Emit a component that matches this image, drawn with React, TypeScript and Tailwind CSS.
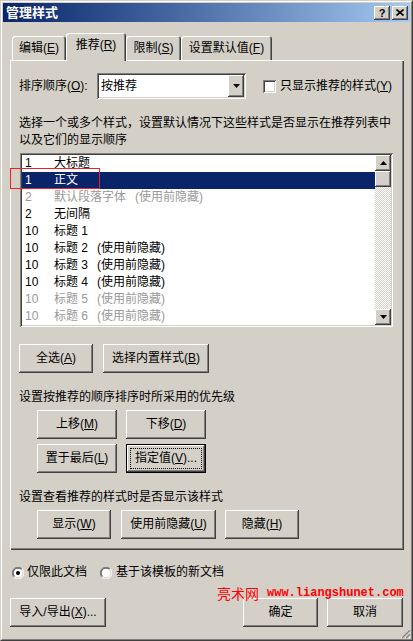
import type { ReactNode } from 'react';

// classic 3D edges
const raised = 'shadow-[inset_-1px_-1px_#404040,inset_1px_1px_#ffffff,inset_-2px_-2px_#808080]';
const sunken =
  'shadow-[inset_1px_1px_#808080,inset_-1px_-1px_#ffffff,inset_2px_2px_#404040,inset_-2px_-2px_#d4d0c8]';

const Btn = ({ w, children }: { w: string; children: ReactNode }) => (
  <div className={`${w} h-[29px] shrink-0 flex items-center justify-center bg-[#d4d0c8] ${raised}`}>
    {children}
  </div>
);

const Tab = ({ w, children }: { w: string; children: ReactNode }) => (
  <div
    className={`${w} h-[24px] mb-[1px] flex items-center justify-center rounded-t-[3px] shadow-[inset_1px_1px_#ffffff,inset_-1px_0_#404040,inset_-2px_0_#808080]`}
  >
    {children}
  </div>
);

const Arrow = ({ up }: { up?: boolean }) => (
  <svg width="7" height="4" viewBox="0 0 7 4">
    <path d={up ? 'M3.5 0 L7 4 L0 4 Z' : 'M0 0 L7 0 L3.5 4 Z'} fill="#000" />
  </svg>
);

const Radio = ({ checked }: { checked?: boolean }) => (
  <svg width="12" height="12" viewBox="0 0 12 12">
    <circle cx="6" cy="6" r="5.5" fill="#ffffff" />
    <path d="M1.8 10.2 A5.5 5.5 0 0 1 10.2 1.8" fill="none" stroke="#808080" strokeWidth="1" />
    <path d="M10.2 1.8 A5.5 5.5 0 0 1 1.8 10.2" fill="none" stroke="#ffffff" strokeWidth="1" />
    <path d="M2.5 9.5 A4.5 4.5 0 0 1 9.5 2.5" fill="none" stroke="#404040" strokeWidth="1" />
    <path d="M9.5 2.5 A4.5 4.5 0 0 1 2.5 9.5" fill="none" stroke="#d4d0c8" strokeWidth="1" />
    {checked && <circle cx="6" cy="6" r="2" fill="#000" />}
  </svg>
);

const styles: { n: string; name: string; hidden?: boolean; gray?: boolean; sel?: boolean }[] = [
  { n: '1', name: '大标题' },
  { n: '1', name: '正文', sel: true },
  { n: '2', name: '默认段落字体', hidden: true, gray: true },
  { n: '2', name: '无间隔' },
  { n: '10', name: '标题 1' },
  { n: '10', name: '标题 2', hidden: true },
  { n: '10', name: '标题 3', hidden: true },
  { n: '10', name: '标题 4', hidden: true },
  { n: '10', name: '标题 5', hidden: true, gray: true },
  { n: '10', name: '标题 6', hidden: true, gray: true },
];

const App = () => {
  return (
    <div className="font-[family-name:'Liberation_Sans','Noto_Sans_CJK_SC',sans-serif] text-[12px] leading-[17px] text-black">
      <div className="relative w-[413px] h-[641px] bg-[#d4d0c8] border border-t-[#d4d0c8] border-l-[#d4d0c8] border-r-[#404040] border-b-[#404040]">
        <div className="h-full border border-t-white border-l-white border-r-[#808080] border-b-[#808080] p-[1px] flex flex-col">
          {/* title bar */}
          <div className="h-[19px] shrink-0 flex items-center justify-between bg-linear-to-r from-[#0a246a] to-[#a6caf0] pl-[3px] pr-[2px]">
            <div className="text-white font-bold text-[13px] leading-[19px]">管理样式</div>
            <div className="flex gap-[2px]">
              <div className={`w-[16px] h-[14px] flex items-center justify-center bg-[#d4d0c8] ${raised}`}>
                <span className="font-bold text-[11px] leading-[12px] font-[family-name:'Liberation_Sans',sans-serif]">?</span>
              </div>
              <div className={`w-[16px] h-[14px] flex items-center justify-center bg-[#d4d0c8] ${raised}`}>
                <svg width="8" height="7" viewBox="0 0 8 7">
                  <path d="M0.5 0.5 L7.5 6.5 M7.5 0.5 L0.5 6.5" stroke="#000" strokeWidth="1.6" />
                </svg>
              </div>
            </div>
          </div>

          <div className="flex flex-col pl-[7px] pr-[6px]">
            {/* tabs */}
            <div className="relative z-10 mt-[11px] ml-[2px] h-[28px] flex items-end">
              <Tab w="w-[54px]">
                编辑(<u>E</u>)
              </Tab>
              <div className="w-[60px] h-[28px] pb-[3px] flex items-center justify-center bg-[#d4d0c8] rounded-t-[3px] shadow-[inset_1px_1px_#ffffff,inset_-1px_0_#404040,inset_-2px_0_#808080]">
                推荐(<u>R</u>)
              </div>
              <Tab w="w-[55px]">
                限制(<u>S</u>)
              </Tab>
              <Tab w="w-[91px]">
                设置默认值(<u>F</u>)
              </Tab>
            </div>

            {/* panel */}
            <div className="-mt-[1px] w-[394px] h-[490px] flex flex-col pl-[9px] pt-[13px] shadow-[inset_1px_1px_#ffffff,inset_-1px_-1px_#404040,inset_-2px_-2px_#808080]">
              <div className="flex items-center h-[26px]">
                <div className="w-[78px]">
                  排序顺序(<u>O</u>):
                </div>
                <div className={`w-[149px] h-[26px] bg-white flex items-center p-[2px] ${sunken}`}>
                  <div className="flex-1 pl-[2px]">按推荐</div>
                  <div className={`w-[16px] h-full flex items-center justify-center bg-[#d4d0c8] ${raised}`}>
                    <Arrow />
                  </div>
                </div>
                <div className={`ml-[17px] w-[13px] h-[13px] bg-white ${sunken}`} />
                <div className="ml-[4px]">
                  只显示推荐的样式(<u>Y</u>)
                </div>
              </div>

              <div className="mt-[16px]">
                <div>选择一个或多个样式，设置默认情况下这些样式是否显示在推荐列表中</div>
                <div>以及它们的显示顺序</div>
              </div>

              {/* style list */}
              <div className={`relative ml-[1px] mt-[4px] w-[373px] h-[174px] bg-white p-[2px] flex ${sunken}`}>
                <div className="flex-1 flex flex-col">
                  {styles.map((s, i) => (
                    <div
                      key={i}
                      className={`h-[17px] flex items-center pl-[3px] ${
                        s.sel ? 'bg-[#0a246a] text-white' : s.gray ? 'text-[#999999]' : 'text-black'
                      }`}
                    >
                      <span className="w-[29px]">{s.n}</span>
                      <span>{s.name}</span>
                      {s.hidden && <span className="ml-[9px]">(使用前隐藏)</span>}
                    </div>
                  ))}
                </div>
                <div className="w-[16px] flex flex-col">
                  <div className={`h-[16px] flex items-center justify-center bg-[#d4d0c8] ${raised}`}>
                    <Arrow up />
                  </div>
                  <div className={`h-[16px] bg-[#d4d0c8] ${raised}`} />
                  <div className="flex-1 bg-[image:repeating-conic-gradient(#d4d0c8_0%_25%,#ffffff_0%_50%)] bg-[length:2px_2px]" />
                  <div className={`h-[16px] flex items-center justify-center bg-[#d4d0c8] ${raised}`}>
                    <Arrow />
                  </div>
                </div>
                <div className="absolute left-[-10px] top-[15px] w-[90px] h-[21px] border border-[#ee2222]" />
              </div>

              <div className="mt-[17px] flex gap-[10px]">
                <Btn w="w-[74px]">
                  全选(<u>A</u>)
                </Btn>
                <Btn w="w-[106px]">
                  选择内置样式(<u>B</u>)
                </Btn>
              </div>

              <div className="mt-[16px]">设置按推荐的顺序排序时所采用的优先级</div>
              <div className="mt-[4px] ml-[18px] grid grid-cols-[80px_80px] gap-x-[9px] gap-y-[5px]">
                <Btn w="w-[80px]">
                  上移(<u>M</u>)
                </Btn>
                <Btn w="w-[80px]">
                  下移(<u>D</u>)
                </Btn>
                <Btn w="w-[80px]">
                  置于最后(<u>L</u>)
                </Btn>
                <div className="w-[80px] h-[29px] border border-black bg-[#d4d0c8]">
                  <div className={`h-full p-[3px] ${raised}`}>
                    <div className="h-full border border-dotted border-black flex items-center justify-center">
                      指定值(<u>V</u>)...
                    </div>
                  </div>
                </div>
              </div>

              <div className="mt-[16px]">设置查看推荐的样式时是否显示该样式</div>
              <div className="mt-[4px] ml-[18px] flex">
                <Btn w="w-[74px]">
                  显示(<u>W</u>)
                </Btn>
                <div className="ml-[10px]">
                  <Btn w="w-[95px]">
                    使用前隐藏(<u>U</u>)
                  </Btn>
                </div>
                <div className="ml-[9px]">
                  <Btn w="w-[74px]">
                    隐藏(<u>H</u>)
                  </Btn>
                </div>
              </div>
            </div>

            {/* scope radios */}
            <div className="mt-[14px] h-[17px] flex items-center">
              <div className="ml-[2px] flex">
                <Radio checked />
              </div>
              <span className="ml-[3px]">仅限此文档</span>
              <div className="ml-[13px] flex">
                <Radio />
              </div>
              <span className="ml-[4px]">基于该模板的新文档</span>
            </div>

            <div className="mt-[17px] flex justify-between pr-[1px]">
              <Btn w="w-[96px]">
                导入/导出(<u>X</u>)...
              </Btn>
              <div className="flex gap-[9px]">
                <Btn w="w-[75px]">确定</Btn>
                <Btn w="w-[76px]">取消</Btn>
              </div>
            </div>
          </div>
        </div>

        {/* site watermark */}
        <div className="absolute left-[216px] top-[583px] flex items-center text-[#ff0000] whitespace-nowrap">
          <span className="text-[14px] leading-[18px] font-[family-name:'Noto_Sans_CJK_SC',serif]">亮术网</span>
          <span className="ml-[8px] text-[12px] leading-[18px] font-bold font-[family-name:'Liberation_Mono',monospace]">
            www.liangshunet.com
          </span>
        </div>

        {/* size grip */}
        <svg className="absolute right-[1px] bottom-[1px]" width="12" height="12" viewBox="0 0 12 12">
          <path d="M11 2 L2 11 M11 6 L6 11 M11 10 L10 11" stroke="#ffffff" strokeWidth="1" />
          <path d="M11 3 L3 11 M11 7 L7 11" stroke="#808080" strokeWidth="1.5" />
        </svg>
      </div>
    </div>
  );
};

export default App;
